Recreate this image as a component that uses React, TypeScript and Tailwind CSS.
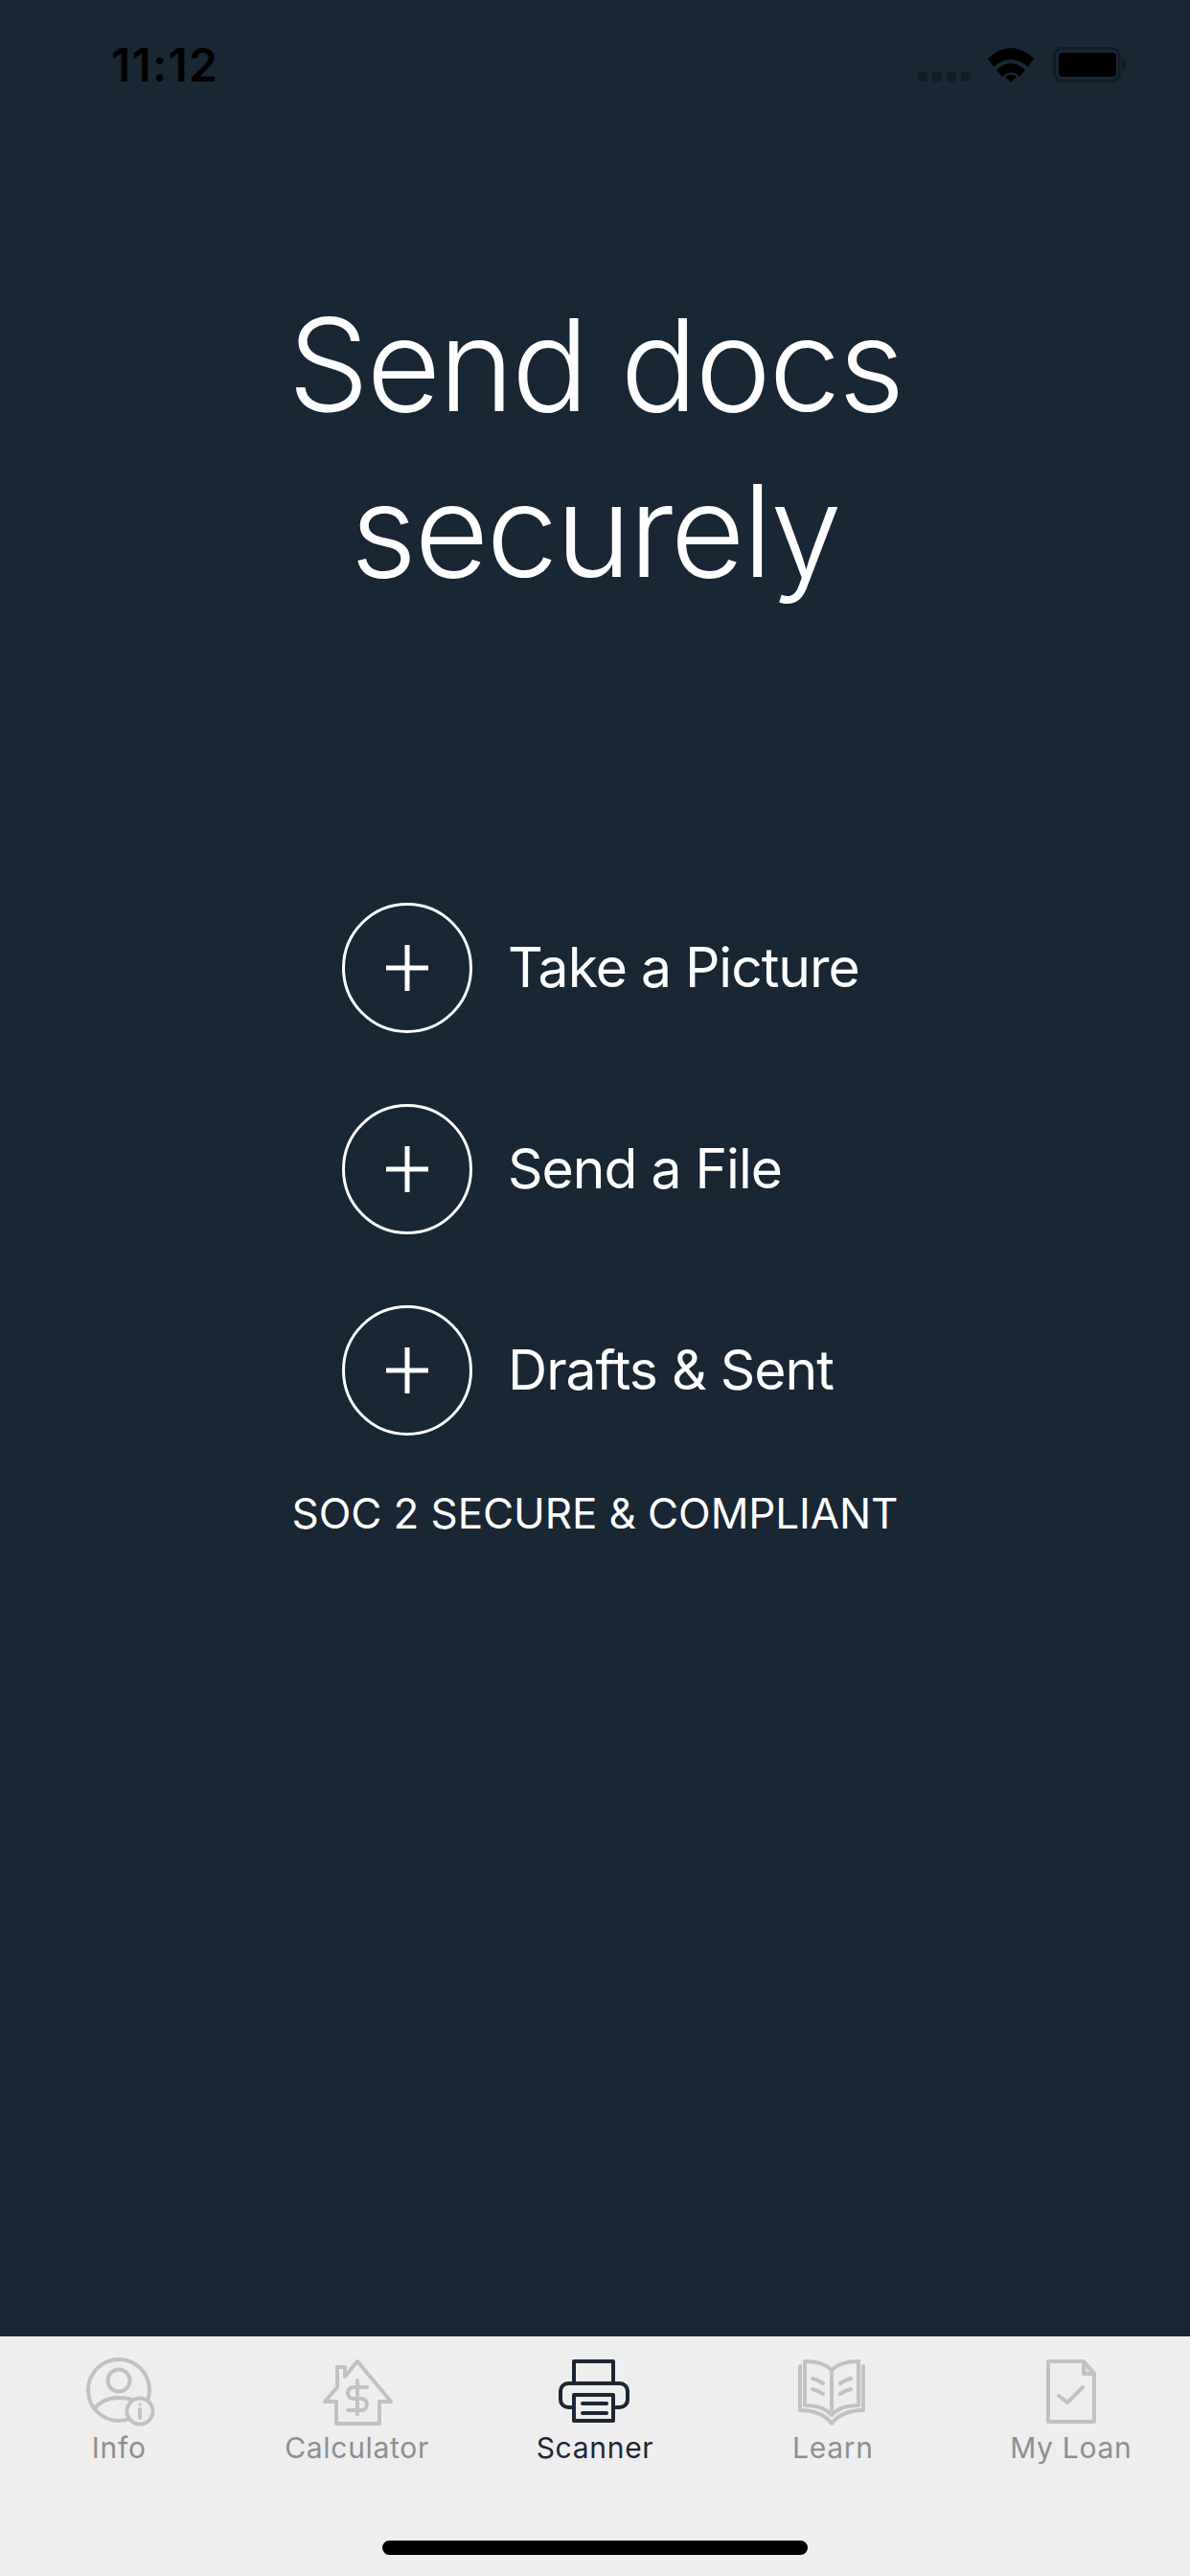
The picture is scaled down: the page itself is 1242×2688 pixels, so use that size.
const actions = ["Take a Picture", "Send a File", "Drafts & Sent"];

function PlusCircle() {
  return (
    <div className="flex h-[136px] w-[136px] shrink-0 items-center justify-center rounded-full border-[3px] border-white">
      <svg width="46" height="48" viewBox="0 0 46 48" fill="none" stroke="#fff" strokeWidth="5">
        <path d="M23 0V48M1 24H45" />
      </svg>
    </div>
  );
}

function InfoIcon() {
  return (
    <svg width="80" height="72" viewBox="0 0 80 72" fill="none" stroke="#c2c2c2" strokeWidth="4">
      <circle cx="40" cy="34" r="32" />
      <circle cx="40" cy="24" r="11.5" />
      <path d="M14 54C21 45 31 42 40 42C47 42 53 43 58 46" />
      <circle cx="62" cy="56" r="13.5" fill="#eeeeee" />
      <path d="M62 54V63" strokeLinecap="round" />
      <circle cx="62" cy="49" r="1.5" fill="#c2c2c2" stroke="none" />
    </svg>
  );
}

function CalculatorIcon() {
  return (
    <svg width="80" height="72" viewBox="0 0 80 72" fill="none" stroke="#c2c2c2" strokeWidth="4" strokeLinejoin="round">
      <path d="M40 4L75 46H63V69H18V46H6L19 31V10H27V20Z" />
      <path d="M50 31H36a6 6 0 0 0 0 12H44a6 6 0 0 1 0 12H30M40 24V59" strokeLinecap="round" />
    </svg>
  );
}

function ScannerIcon() {
  return (
    <svg width="80" height="72" viewBox="0 0 80 72" fill="none" stroke="#1b2735" strokeWidth="4" strokeLinejoin="round">
      <path d="M18 27V4H59V27" />
      <rect x="4" y="27" width="70" height="25" rx="8" />
      <rect x="18" y="39" width="41" height="27" fill="#eeeeee" />
      <path d="M27 48H52M27 58H52" strokeLinecap="round" />
    </svg>
  );
}

function LearnIcon() {
  return (
    <svg width="80" height="72" viewBox="0 0 80 72" fill="none" stroke="#c2c2c2" strokeWidth="4" strokeLinejoin="round" strokeLinecap="round">
      <path d="M39 60V13C33 7 22 4 11 4V50C22 50 33 53 39 60C45 53 56 50 67 50V4C56 4 45 7 39 13" />
      <path d="M6 9V55C20 55 33 60 39 69C45 60 58 55 72 55V9" />
      <path d="M19 22C23 23 27 25 30 27M19 33C23 34 27 36 30 38M59 22C55 23 51 25 48 27M59 33C55 34 51 36 48 38" />
    </svg>
  );
}

function LoanIcon() {
  return (
    <svg width="80" height="72" viewBox="0 0 80 72" fill="none" stroke="#c2c2c2" strokeWidth="4" strokeLinejoin="round" strokeLinecap="round">
      <path d="M16 4H53L64 17V67H16Z" />
      <path d="M53 4V17H64Z" fill="#c2c2c2" fillOpacity="0.4" />
      <path d="M27 40L36 47L52 31" />
    </svg>
  );
}

const tabs = [
  { label: "Info", icon: <InfoIcon /> },
  { label: "Calculator", icon: <CalculatorIcon /> },
  { label: "Scanner", icon: <ScannerIcon />, active: true },
  { label: "Learn", icon: <LearnIcon /> },
  { label: "My Loan", icon: <LoanIcon /> },
];

export default function App() {
  return (
    <div className="flex h-[2688px] w-[1242px] flex-col overflow-hidden bg-[#192633] font-['Inter',sans-serif]">
      <div className="flex h-[134px] shrink-0 justify-between pl-[116px] pr-[72px] pt-[40px]">
        <div className="text-[48px] leading-[56px] font-semibold tracking-[1.2px] text-black">11:12</div>
        <div className="flex items-start pt-[9px]">
          <div className="mt-[26px] flex gap-[5px]">
            <span className="h-[10px] w-[10px] rounded-[3px] bg-[#121b24]" />
            <span className="h-[10px] w-[10px] rounded-[3px] bg-[#121b24]" />
            <span className="h-[10px] w-[10px] rounded-[3px] bg-[#121b24]" />
            <span className="h-[10px] w-[10px] rounded-[3px] bg-[#121b24]" />
          </div>
          <svg className="ml-[18px] mt-[1px]" width="48" height="36" viewBox="0 0 48 36" fill="#000">
            <path d="M0 11Q24 -11 48 11L42 20Q24 4 6 20Z" />
            <path d="M9 23Q24 9 39 23L33 30Q24 21 15 30Z" />
            <path d="M18 30Q24 26 30 30L24 36Z" />
          </svg>
          <div className="relative ml-[20px] flex h-[37px] w-[71px] items-center justify-center rounded-[9px] border-[3px] border-[#121b24]">
            <div className="h-[25px] w-[60px] rounded-[4px] bg-black" />
            <span className="absolute -right-[8px] top-[10px] h-[12px] w-[4px] rounded-r-[3px] bg-[#121b24]" />
          </div>
        </div>
      </div>

      <main className="flex flex-1 flex-col items-center pt-[160px]">
        <h1 className="text-center text-[134px] leading-[173px] font-light tracking-[-2.5px] text-white">
          Send docs
          <br />
          securely
        </h1>
        <div className="mt-[302px] flex w-[526px] flex-col gap-[74px] self-start ml-[357px]">
          {actions.map((a) => (
            <div key={a} className="flex items-center gap-[37px]">
              <PlusCircle />
              <span className="whitespace-nowrap text-[57px] tracking-[-1px] text-white">{a}</span>
            </div>
          ))}
        </div>
        <p className="mt-[52px] text-[44px] leading-[58px] tracking-[-0.1px] text-white">SOC 2 SECURE &amp; COMPLIANT</p>
      </main>

      <nav className="flex h-[250px] shrink-0 flex-col bg-[#eeeeee]">
        <div className="grid grid-cols-5 pt-[22px]">
          {tabs.map((t) => (
            <div key={t.label} className="flex flex-col items-center">
              {t.icon}
              <span className={"mt-[4px] text-[30px] leading-[36px] tracking-[0.7px] " + (t.active ? "text-[#1b2735]" : "text-[#8f8f8f]")}>
                {t.label}
              </span>
            </div>
          ))}
        </div>
        <div className="mx-auto mt-[79px] h-[15px] w-[444px] rounded-full bg-black" />
      </nav>
    </div>
  );
}
